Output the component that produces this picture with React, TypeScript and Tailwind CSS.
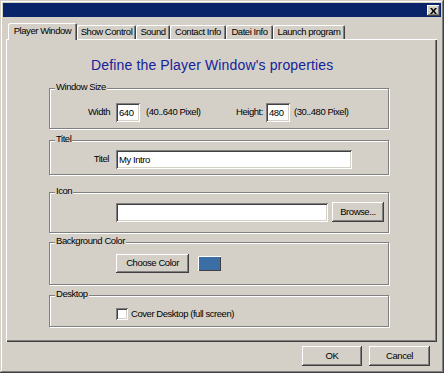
import React from "react";

const small = {
  fontFamily: '"Liberation Sans", Arial, sans-serif',
  fontSize: "9.5px",
  letterSpacing: "-0.45px",
};

const raised =
  "shadow-[inset_-1px_-1px_0_#404040,inset_1px_1px_0_#ffffff,inset_-2px_-2px_0_#808080]";
const sunken =
  "shadow-[inset_1px_1px_0_#808080,inset_-1px_-1px_0_#ffffff,inset_2px_2px_0_#404040,inset_-2px_-2px_0_#d4d0c8]";

function Group({
  label,
  h,
  mt,
  pt,
  children,
}: {
  label: string;
  h: string;
  mt: string;
  pt: string;
  children: React.ReactNode;
}) {
  return (
    <div
      className={`relative ml-[42px] w-[340px] ${h} ${mt} ${pt} border border-[#808080] shadow-[inset_1px_1px_0_#ffffff,1px_1px_0_#ffffff]`}
    >
      <span
        className="absolute left-[5px] -top-[8px] px-[1px] bg-[#d4d0c8] leading-[12px] text-black whitespace-nowrap"
        style={small}
      >
        {label}
      </span>
      {children}
    </div>
  );
}

function TextBox({ w, value }: { w: string; value: string }) {
  return (
    <input
      readOnly
      value={value}
      className={`${w} h-[19px] bg-white ${sunken} outline-none border-0 px-[3px] text-black`}
      style={small}
    />
  );
}

function Button({ w, h, children }: { w: string; h: string; children: React.ReactNode }) {
  return (
    <div
      className={`${w} ${h} ${raised} bg-[#d4d0c8] flex items-center justify-center text-black whitespace-nowrap`}
      style={small}
    >
      {children}
    </div>
  );
}

function Tab({ label, w, selected }: { label: string; w: string; selected?: boolean }) {
  if (selected) {
    return (
      <div
        className={`relative z-10 -mb-[1px] ${w} h-[17px] bg-[#d4d0c8] rounded-t-[2px] shadow-[inset_1px_1px_0_#ffffff,inset_-1px_0_0_#404040,inset_-2px_0_0_#808080] flex justify-center pt-[2px] leading-[12px] text-black whitespace-nowrap`}
        style={small}
      >
        {label}
      </div>
    );
  }
  return (
    <div
      className={`${w} h-[14px] bg-[#d4d0c8] rounded-t-[2px] shadow-[inset_1px_1px_0_#ffffff,inset_-1px_0_0_#404040,inset_-2px_0_0_#808080] flex justify-center pt-[1px] leading-[12px] text-black whitespace-nowrap`}
      style={small}
    >
      {label}
    </div>
  );
}

export default function App() {
  return (
    <div className="w-[444px] h-[373px] bg-[#d4d0c8] p-[3px] shadow-[inset_-1px_-1px_0_#404040,inset_1px_1px_0_#d4d0c8,inset_-2px_-2px_0_#808080,inset_2px_2px_0_#ffffff] overflow-hidden">
      {/* Title bar */}
      <div className="h-[14px] bg-[#0a246a] flex justify-end items-start pt-[2px] pr-[1px]">
        <div className={`w-[13px] h-[11px] bg-[#d4d0c8] ${raised} flex items-center justify-center`}>
          <svg width="7" height="6" viewBox="0 0 7 6">
            <path d="M0 0h2l1.5 2 1.5-2h2L4.5 3 7 6H5L3.5 4 2 6H0l2.5-3z" fill="#000" />
          </svg>
        </div>
      </div>

      {/* Tabs */}
      <div className="mt-[6px] h-[16px] flex items-end pl-[5px]">
        <Tab label="Player Window" w="w-[69px]" selected />
        <Tab label="Show Control" w="w-[59px]" />
        <Tab label="Sound" w="w-[34px]" />
        <Tab label="Contact Info" w="w-[56px]" />
        <Tab label="Datei Info" w="w-[47px]" />
        <Tab label="Launch program" w="w-[72px]" />
      </div>

      {/* Panel */}
      <div className="ml-[3px] w-[431px] h-[303px] border-t border-l border-white shadow-[inset_-1px_-1px_0_#404040,inset_-2px_-2px_0_#808080] flex flex-col">
        <div
          className="mt-[17px] ml-[84px] text-[14px] leading-[16px] tracking-[0.15px] text-[#14229a] whitespace-nowrap"
          style={{ fontFamily: '"Liberation Sans", Arial, sans-serif' }}
        >
          Define the Player Window's properties
        </div>

        <Group label="Window Size" h="h-[41px]" mt="mt-[15px]" pt="pt-[14px]">
          <div className="flex items-center text-black whitespace-nowrap" style={small}>
            <div className="w-[66px] text-right pr-[6px]">Width</div>
            <TextBox w="w-[24px]" value="640" />
            <div className="w-[96px] pl-[6px]">(40..640 Pixel)</div>
            <div className="w-[30px] text-right pr-[3px]">Height:</div>
            <TextBox w="w-[24px]" value="480" />
            <div className="pl-[4px]">(30..480 Pixel)</div>
          </div>
        </Group>

        <Group label="Titel" h="h-[35px]" mt="mt-[11px]" pt="pt-[9px]">
          <div className="flex items-center text-black whitespace-nowrap" style={small}>
            <div className="w-[66px] text-right pr-[7px]">Titel</div>
            <TextBox w="w-[236px]" value="My Intro" />
          </div>
        </Group>

        <Group label="Icon" h="h-[41px]" mt="mt-[17px]" pt="pt-[9px]">
          <div className="flex items-center pl-[66px]">
            <TextBox w="w-[212px]" value="" />
            <div className="ml-[4px]">
              <Button w="w-[52px]" h="h-[20px]">Browse...</Button>
            </div>
          </div>
        </Group>

        <Group label="Background Color" h="h-[43px]" mt="mt-[9px]" pt="pt-[11px]">
          <div className="flex items-center pl-[66px]">
            <Button w="w-[73px]" h="h-[19px]">Choose Color</Button>
            <div className="ml-[9px] w-[23px] h-[15px] bg-[#3a6ea5] shadow-[inset_1px_1px_0_#ffffff,inset_-1px_-1px_0_#404040]" />
          </div>
        </Group>

        <Group label="Desktop" h="h-[32px]" mt="mt-[10px]" pt="pt-[11px]">
          <div className="flex items-center pl-[66px] text-black whitespace-nowrap" style={small}>
            <div className={`w-[12px] h-[12px] bg-white ${sunken}`} />
            <div className="ml-[3px]">Cover Desktop (full screen)</div>
          </div>
        </Group>
      </div>

      {/* Buttons */}
      <div className="mt-[4px] flex pl-[299px]">
        <Button w="w-[60px]" h="h-[20px]">OK</Button>
        <div className="ml-[7px]">
          <Button w="w-[61px]" h="h-[20px]">Cancel</Button>
        </div>
      </div>
    </div>
  );
}
